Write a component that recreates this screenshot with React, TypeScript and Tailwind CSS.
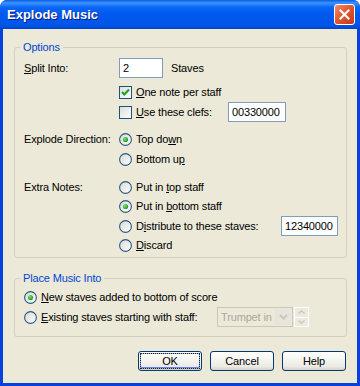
import React from "react";

const font = { fontFamily: '"Liberation Sans", Arial, sans-serif' };

const Checkbox = ({ checked }: { checked?: boolean }) => (
  <svg width="13" height="13" viewBox="0 0 13 13" className="shrink-0">
    <defs>
      <linearGradient id="cbg" x1="0" y1="0" x2="1" y2="1">
        <stop offset="0" stopColor="#dcdcd7" />
        <stop offset="1" stopColor="#ffffff" />
      </linearGradient>
    </defs>
    <rect x="0.5" y="0.5" width="12" height="12" fill="url(#cbg)" stroke="#1c5180" />
    {checked && (
      <path d="M3 6 L5.3 8.4 L10 3.6" fill="none" stroke="#21a121" strokeWidth="2.2" />
    )}
  </svg>
);

const Radio = ({ checked }: { checked?: boolean }) => (
  <svg width="13" height="13" viewBox="0 0 13 13" className="shrink-0">
    <defs>
      <linearGradient id="rbg" x1="0" y1="0" x2="1" y2="1">
        <stop offset="0" stopColor="#d8d8d2" />
        <stop offset="1" stopColor="#ffffff" />
      </linearGradient>
      <radialGradient id="rdot" cx="0.35" cy="0.35" r="0.7">
        <stop offset="0" stopColor="#74e472" />
        <stop offset="1" stopColor="#1d9a1d" />
      </radialGradient>
    </defs>
    <circle cx="6.5" cy="6.5" r="5.9" fill="url(#rbg)" stroke="#2a5886" strokeWidth="1.1" />
    {checked && <circle cx="6.5" cy="6.5" r="2.6" fill="url(#rdot)" />}
  </svg>
);

const Field = ({ value, w }: { value: string; w: string }) => (
  <div className={`${w} h-[20px] border border-[#7f9db9] bg-white pl-[3px] flex items-center text-black`}>
    {value}
  </div>
);

const Row = ({
  label,
  h,
  className,
  children,
}: {
  label?: string;
  h: string;
  className?: string;
  children: React.ReactNode;
}) => (
  <div className={`flex items-center ${h} ${className ?? ""}`}>
    <div className="w-[95px] shrink-0">{label}</div>
    <div className="flex items-center">{children}</div>
  </div>
);

const Choice = ({
  kind,
  checked,
  w,
  children,
}: {
  kind: "radio" | "check";
  checked?: boolean;
  w?: string;
  children: React.ReactNode;
}) => (
  <span className={`flex items-center gap-[4px] shrink-0 ${w ?? ""}`}>
    {kind === "radio" ? <Radio checked={checked} /> : <Checkbox checked={checked} />}
    <span className="whitespace-nowrap">{children}</span>
  </span>
);

const Group = ({
  title,
  className,
  children,
}: {
  title: string;
  className?: string;
  children: React.ReactNode;
}) => (
  <div className={`relative ml-[11px] mr-[10px] border border-[#d0d0bf] rounded-[3px] ${className ?? ""}`}>
    <span className="absolute left-[5px] top-[-8px] px-[3px] bg-[#ece9d8] text-[#0046d5] leading-[14px]">
      {title}
    </span>
    {children}
  </div>
);

const Button = ({ label, isDefault }: { label: string; isDefault?: boolean }) => (
  <div className="w-[64px] h-[20px] rounded-[3px] border border-[#003c74] bg-[linear-gradient(180deg,#ffffff_0%,#f6f6f1_40%,#ecebe5_80%,#d6d0c5_100%)] p-[1px]">
    <div
      className={`w-full h-full rounded-[2px] flex items-center justify-center ${
        isDefault ? "shadow-[inset_0_0_0_1px_#8fb1f0,inset_0_-1px_0_1px_#6982ee]" : ""
      }`}
    >
      <span
        className={`flex items-center justify-center w-[58px] h-[14px] ${
          isDefault ? "outline outline-1 outline-dotted outline-[#222]" : ""
        }`}
      >
        {label}
      </span>
    </div>
  </div>
);

export default function App() {
  return (
    <div
      style={font}
      className="w-[360px] h-[386px] flex flex-col bg-[#0842dd] rounded-t-[7px] overflow-hidden text-[11px] tracking-[-0.15px] text-black"
    >
      {/* Title bar */}
      <div className="h-[29px] shrink-0 flex items-center justify-between pl-[7px] pr-[5px] bg-[linear-gradient(180deg,#0a5de0_0%,#3d93ff_10%,#0a66f6_25%,#0058ee_50%,#0057eb_80%,#0050df_92%,#0043c8_100%)]">
        <span className="text-white font-bold text-[13px] tracking-normal [text-shadow:1px_1px_0_#0a1a7f] leading-none pb-[1px]">
          Explode Music
        </span>
        <div className="w-[21px] h-[21px] rounded-[3px] border border-white bg-[linear-gradient(135deg,#f28d6e_0%,#e2582f_45%,#c5371a_100%)] flex items-center justify-center">
          <svg width="11" height="11" viewBox="0 0 11 11">
            <path d="M1.5 1.5 L9.5 9.5 M9.5 1.5 L1.5 9.5" stroke="white" strokeWidth="2.2" strokeLinecap="square" />
          </svg>
        </div>
      </div>

      {/* Client area */}
      <div className="flex-1 mx-[3px] mb-[3px] bg-[#ece9d8] flex flex-col">
        <Group title="Options" className="mt-[18px] h-[211px] pt-[10px] pl-[9px]">
          <div className="flex items-center h-[20px]">
            <div className="w-[95px] shrink-0">
              <u>S</u>plit Into:
            </div>
            <Field value="2" w="w-[44px]" />
            <span className="ml-[8px]">Staves</span>
          </div>
          <Row h="h-[20px]" className="mt-[4px]">
            <Choice kind="check" checked>
              <u>O</u>ne note per staff
            </Choice>
          </Row>
          <Row h="h-[20px]">
            <Choice kind="check" w="w-[109px]">
              <u>U</u>se these clefs:
            </Choice>
            <Field value="00330000" w="w-[58px]" />
          </Row>
          <Row label="Explode Direction:" h="h-[20px]" className="mt-[7px]">
            <Choice kind="radio" checked>
              Top do<u>w</u>n
            </Choice>
          </Row>
          <Row h="h-[20px]">
            <Choice kind="radio">
              Bottom u<u>p</u>
            </Choice>
          </Row>
          <Row label="Extra Notes:" h="h-[19px]" className="mt-[9px]">
            <Choice kind="radio">
              Put in <u>t</u>op staff
            </Choice>
          </Row>
          <Row h="h-[19px]">
            <Choice kind="radio" checked>
              Put in <u>b</u>ottom staff
            </Choice>
          </Row>
          <Row h="h-[20px]">
            <Choice kind="radio" w="w-[162px]">
              D<u>i</u>stribute to these staves:
            </Choice>
            <Field value="12340000" w="w-[57px]" />
          </Row>
          <Row h="h-[19px]">
            <Choice kind="radio">
              <u>D</u>iscard
            </Choice>
          </Row>
        </Group>

        <Group title="Place Music Into" className="mt-[20px] h-[59px] pt-[8px] pl-[9px]">
          <div className="h-[20px] flex items-center">
            <Choice kind="radio" checked>
              <u>N</u>ew staves added to bottom of score
            </Choice>
          </div>
          <div className="h-[20px] flex items-center">
            <Choice kind="radio" w="w-[193px]">
              <u>E</u>xisting staves starting with staff:
            </Choice>
            <div className="w-[76px] h-[20px] border border-[#c9c7ba] flex items-center justify-between pl-[3px] pr-[1px]">
              <span className="text-[#aca899]">Trumpet in</span>
              <div className="w-[16px] h-[16px] bg-[#e6e4dc] flex items-center justify-center">
                <svg width="9" height="6" viewBox="0 0 9 6">
                  <path d="M1 1 L4.5 4.5 L8 1" fill="none" stroke="#c9c7ba" strokeWidth="2" />
                </svg>
              </div>
            </div>
            <div className="ml-[1px] w-[15px] h-[20px] border border-white flex flex-col">
              <div className="flex-1 bg-[#ebe9e0] flex items-center justify-center border-b border-white">
                <svg width="7" height="4" viewBox="0 0 7 4">
                  <path d="M0.5 3.5 L3.5 0.8 L6.5 3.5" fill="none" stroke="#c9c7ba" strokeWidth="1.3" />
                </svg>
              </div>
              <div className="flex-1 bg-[#ebe9e0] flex items-center justify-center">
                <svg width="7" height="4" viewBox="0 0 7 4">
                  <path d="M0.5 0.5 L3.5 3.2 L6.5 0.5" fill="none" stroke="#c9c7ba" strokeWidth="1.3" />
                </svg>
              </div>
            </div>
          </div>
        </Group>

        <div className="mt-[14px] mr-[11px] flex justify-end gap-[8px]">
          <Button label="OK" isDefault />
          <Button label="Cancel" />
          <Button label="Help" />
        </div>
      </div>
    </div>
  );
}
